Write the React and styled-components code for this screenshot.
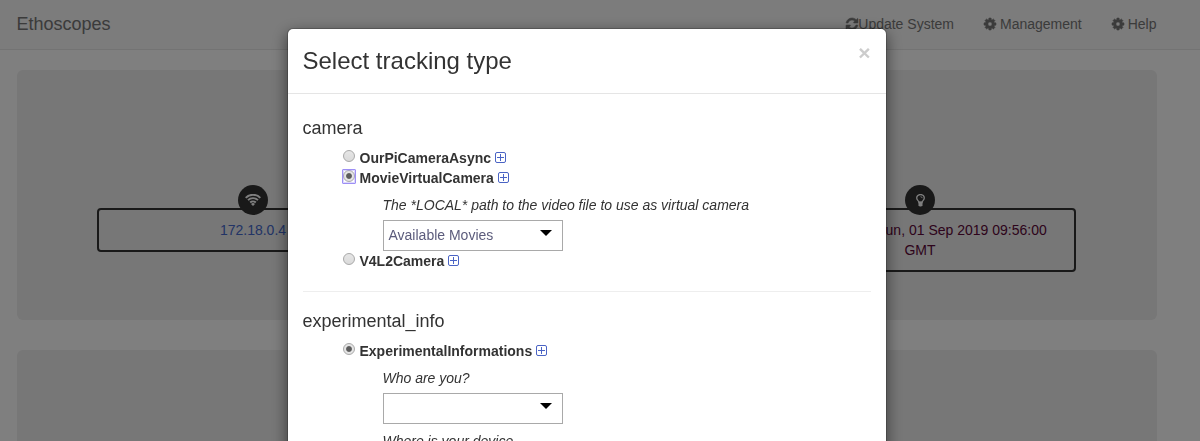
import React from "react";
import styled, { createGlobalStyle } from "styled-components";

const Global = createGlobalStyle`
  *, *::before, *::after { box-sizing: border-box; }
  html, body { margin: 0; height: 100%; overflow: hidden; background: #fff; }
  body { font: 14px/20px "Liberation Sans", Arial, sans-serif; color: #333; }
`;

const Page = styled.div`
  height: 441px;
  overflow: hidden;
`;

const Navbar = styled.nav`
  display: flex;
  justify-content: space-between;
  height: 50px;
  padding: 14px 43.5px 0 16.5px;
  background: #f8f8f8;
  border-bottom: 1px solid #e7e7e7;
  color: #777;
`;

const Brand = styled.div`
  font-size: 18px;
`;

const NavLinks = styled.div`
  display: flex;
  gap: 30px;
`;

const NavLink = styled.a`
  display: flex;
  align-items: center;
  height: 20px;
  gap: ${(p) => (p.$tight ? "0" : "4px")};
`;

const NavIcon = styled.svg`
  width: 12px;
  height: 12px;
  fill: currentColor;
  stroke: currentColor;
  stroke-width: 70;
  overflow: visible;
`;

const Panels = styled.main`
  display: flex;
  flex-direction: column;
  gap: 30px;
  padding: 20px 43px 0 17px;
`;

const Panel = styled.section`
  display: flex;
  justify-content: space-between;
  align-items: flex-start;
  height: 250px;
  padding: 138px 81px 0 80px;
  background: #eee;
  border-radius: 6px;
`;

const StatusCard = styled.div`
  position: relative;
  width: 312px;
  padding: 10px 20px;
  border: 2px solid #333;
  border-radius: 4px;
  text-align: center;
  text-indent: ${(p) => p.$indent || "0"};
  color: ${(p) => p.$color};
`;

const StatusBadge = styled.span`
  position: absolute;
  top: -25px;
  left: 50%;
  display: flex;
  align-items: center;
  justify-content: center;
  width: 30px;
  height: 30px;
  margin-left: -15px;
  border-radius: 50%;
  background: #333;
  text-indent: 0;
`;

const Backdrop = styled.div`
  position: fixed;
  inset: 0;
  display: flex;
  justify-content: center;
  align-items: flex-start;
  padding: 28px 26px 0 0;
  background: rgba(0, 0, 0, 0.5);
`;

const Dialog = styled.div`
  width: 600px;
  height: 600px;
  background: #fff;
  background-clip: padding-box;
  border: 1px solid rgba(0, 0, 0, 0.2);
  border-radius: 6px;
  box-shadow: 0 5px 15px rgba(0, 0, 0, 0.5);
`;

const DialogHeader = styled.header`
  display: flex;
  justify-content: space-between;
  height: 65px;
  padding: 15px 15.5px 15px 14.5px;
  border-bottom: 1px solid #e5e5e5;
`;

const Title = styled.h3`
  margin: 3px 0 0;
  font-size: 24px;
  line-height: 27px;
  font-weight: 400;
`;

const Close = styled.button`
  height: 21px;
  margin-top: -2px;
  padding: 0;
  border: 0;
  background: none;
  font: bold 21px/21px "Liberation Sans", Arial, sans-serif;
  color: #ccc;
`;

const Group = styled.section`
  margin: 0 15.5px 0 14.5px;
  padding-top: ${(p) => p.$top};
  height: ${(p) => p.$height};
  border-bottom: 1px solid #eee;
`;

const GroupTitle = styled.h4`
  margin: 0 0 10px;
  font-size: 18px;
  line-height: 20px;
  font-weight: 400;
`;

const Option = styled.div`
  display: flex;
  align-items: center;
  height: 20px;
  padding-left: 40.5px;
  font-weight: 700;
`;

const Radio = styled.span`
  position: relative;
  flex: none;
  width: 12px;
  height: 12px;
  margin: -4px 4.5px 0 0;
  border: 1px solid #a9a9a9;
  border-radius: 50%;
  background: ${(p) =>
    p.$checked
      ? "radial-gradient(circle, #5c5c5c 0 2.4px, #e4e4e4 3.4px)"
      : "linear-gradient(#e6e6e6, #dadada)"};

  &::after {
    content: "";
    display: ${(p) => (p.$focused ? "block" : "none")};
    position: absolute;
    inset: -2px -2px -3px;
    border: 1px solid #9d8ff5;
    border-radius: 1px;
    box-shadow: inset 0 0 0 1px rgba(157, 143, 245, 0.35);
  }
`;

const Expand = styled.svg`
  width: 11px;
  height: 11px;
  margin: 0 0 1px 4px;
  fill: none;
  stroke: #4a63c4;
`;

const Field = styled.div`
  margin-left: 80px;
  padding-top: 7px;
`;

const Hint = styled.div`
  margin-bottom: 5px;
  font-style: italic;
`;

const Select = styled.div`
  display: flex;
  justify-content: space-between;
  width: 180px;
  height: 31px;
  padding: 4px 10px 0 5px;
  border: 1px solid #a9a9a9;
  color: #5c5c7c;
`;

const Caret = styled.svg`
  width: 12px;
  height: 6px;
  margin: 5px 0 0 auto;
`;

const COG =
  "M1024 896q0-106-75-181t-181-75-181 75-75 181 75 181 181 75 181-75 75-181zm512-109v222q0 12-8 23t-20 13l-185 28q-19 54-39 91 35 50 107 138 10 12 10 25t-9 23q-27 37-99 108t-94 71q-12 0-26-9l-138-108q-44 23-91 38-16 136-29 186-7 28-36 28h-222q-14 0-24.500-8.500t-11.500-21.500l-28-184q-49-16-90-37l-141 107q-10 9-25 9-14 0-25-11-126-114-165-168-7-10-7-23 0-12 8-23 15-21 51-66.500t54-70.500q-27-50-41-99l-183-27q-13-2-21-12.500t-8-23.500v-222q0-12 8-23t19-13l186-28q14-46 39-92-40-57-107-138-10-12-10-24 0-10 9-23 26-36 98.500-107.500t94.500-71.500q13 0 26 10l138 107q44-23 91-38 16-136 29-186 7-28 36-28h222q14 0 24.500 8.500t11.500 21.500l28 184q49 16 90 37l142-107q9-9 24-9 13 0 25 10 129 119 165 170 7 8 7 22 0 12-8 23-15 21-51 66.500t-54 70.500q26 50 41 98l183 28q13 2 21 12.500t8 23.500z";
const REFRESH =
  "M1639 1056q0 5-1 7-64 268-268 434.500t-478 166.500q-146 0-282.500-55t-243.500-157l-129 129q-19 19-45 19t-45-19-19-45v-448q0-26 19-45t45-19h448q26 0 45 19t19 45-19 45l-137 137q71 66 161 102t187 36q134 0 250-65t186-179q11-17 53-117 8-23 30-23h192q13 0 22.500 9.500t9.500 22.500zm25-800v448q0 26-19 45t-45 19h-448q-26 0-45-19t-19-45 19-45l138-138q-148-137-349-137-134 0-250 65t-186 179q-11 17-53 117-8 23-30 23h-199q-13 0-22.500-9.500t-9.500-22.500v-7q65-268 270-434.500t480-166.500q146 0 284 55.500t245 156.500l130-129q19-19 45-19t45 19 19 45z";

const CogIcon = () => (
  <NavIcon viewBox="0 128 1536 1536"><path d={COG} /></NavIcon>
);
const RefreshIcon = () => (
  <NavIcon viewBox="128 128 1536 1536"><path d={REFRESH} /></NavIcon>
);

const WifiIcon = () => (
  <svg width="16" height="12" viewBox="0 0 16 12" fill="none" stroke="#fff" strokeWidth="1.900">
    <path d="M.7 3.800a10.300 10.300 0 0 1 14.600 0M3 6.200a7.100 7.100 0 0 1 10 0M5.200 8.500a4 4 0 0 1 5.600 0" />
    <path d="M6 9.900a2.800 2.800 0 0 1 4 0L8 12z" fill="#fff" stroke="none" />
  </svg>
);

const BulbIcon = () => (
  <svg width="9" height="13" viewBox="0 0 9 13" fill="none" stroke="#fff" strokeWidth="1.300">
    <path d="M3 8.500C3 6.800.7 6.400.7 4.100A3.700 3.500 0 0 1 8.300 4.100C8.300 6.400 6 6.800 6 8.500z" />
    <path d="M4.500 2.600q1.500 0 1.700 1.500" strokeWidth=".8" />
    <path d="M2.500 7.500h4v3.800L5.300 12.500H3.700L2.500 11.300z" fill="#fff" stroke="none" />
  </svg>
);

const Choice = ({ label, ...radio }) => (
  <Option>
    <Radio {...radio} />
    {label}
    <Expand viewBox="0 0 11 11">
      <rect x=".5" y=".5" width="10" height="10" rx="1.500" />
      <path d="M5.500 2v7M2 5.500h7" />
    </Expand>
  </Option>
);

const Dropdown = ({ children }) => (
  <Select>
    {children}
    <Caret viewBox="0 0 12 6"><path d="M0 0h12L6 6z" /></Caret>
  </Select>
);

export default function App() {
  return (
    <Page>
      <Global />
      <Navbar>
        <Brand>Ethoscopes</Brand>
        <NavLinks>
          <NavLink $tight><RefreshIcon />Update System</NavLink>
          <NavLink><CogIcon />Management</NavLink>
          <NavLink><CogIcon />Help</NavLink>
        </NavLinks>
      </Navbar>
      <Panels>
        <Panel>
          <StatusCard $color="#4468cc">
            <StatusBadge><WifiIcon /></StatusBadge>
            172.18.0.4
          </StatusCard>
          <StatusCard $color="#5c0838" $indent="83px">
            <StatusBadge><BulbIcon /></StatusBadge>
            Sun, 01 Sep 2019 09:56:00 GMT
          </StatusCard>
        </Panel>
        <Panel />
      </Panels>
      <Backdrop>
        <Dialog>
          <DialogHeader>
            <Title>Select tracking type</Title>
            <Close>×</Close>
          </DialogHeader>
          <Group $top="24px" $height="198px">
            <GroupTitle>camera</GroupTitle>
            <Choice label="OurPiCameraAsync" />
            <Choice label="MovieVirtualCamera" $checked $focused />
            <Field>
              <Hint>The *LOCAL* path to the video file to use as virtual camera</Hint>
              <Dropdown>Available Movies</Dropdown>
            </Field>
            <Choice label="V4L2Camera" />
          </Group>
          <Group $top="19px" $height="300px">
            <GroupTitle>experimental_info</GroupTitle>
            <Choice label="ExperimentalInformations" $checked />
            <Field>
              <Hint>Who are you?</Hint>
              <Dropdown />
            </Field>
            <Field>
              <Hint>Where is your device</Hint>
            </Field>
          </Group>
        </Dialog>
      </Backdrop>
    </Page>
  );
}
